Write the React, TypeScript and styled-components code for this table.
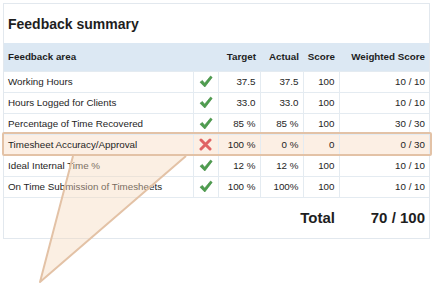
import styled, { createGlobalStyle } from 'styled-components';

const GlobalStyle = createGlobalStyle`
  html, body {
    margin: 0;
    padding: 0;
    background: #ffffff;
  }
  body {
    font-family: 'Liberation Sans', Arial, sans-serif;
    color: #1e1e1e;
  }
`;

const Page = styled.div`
  position: relative;
  width: 436px;
  height: 285px;
  padding: 3px 0 0 3px;
  box-sizing: border-box;
`;

const Card = styled.div`
  width: 427px;
  border: 1px solid #e2e8ee;
  box-sizing: border-box;
  background: #ffffff;
`;

const Title = styled.div`
  height: 39px;
  padding-left: 4px;
  display: flex;
  align-items: center;
  font-size: 14px;
  font-weight: 700;
`;

const Table = styled.table`
  width: 100%;
  border-collapse: collapse;
  table-layout: fixed;
  font-size: 9.8px;
`;

const HeadCell = styled.th<{ align?: 'left' | 'right' | 'center'; width: number }>`
  box-sizing: border-box;
  width: ${(p) => p.width}px;
  height: 28px;
  padding: 0 4px;
  background: #dce8f3;
  font-weight: 700;
  text-align: ${(p) => p.align ?? 'right'};
  white-space: nowrap;
`;

const BodyRow = styled.tr<{ flagged?: boolean }>`
  background: ${(p) => (p.flagged ? '#fcefe4' : 'transparent')};
`;

const Cell = styled.td<{ align?: 'left' | 'right' | 'center'; last?: boolean }>`
  height: 20px;
  padding: 0 4px;
  text-align: ${(p) => p.align ?? 'right'};
  border-top: 1px solid #e4ebf1;
  border-right: ${(p) => (p.last ? 'none' : '1px solid #e4ebf1')};
  white-space: nowrap;
  line-height: 1;
  vertical-align: middle;
`;

const TotalCell = styled.td<{ align?: 'left' | 'right' }>`
  height: 40px;
  padding: 0 4px;
  text-align: ${(p) => p.align ?? 'right'};
  border-top: 1px solid #e4ebf1;
  font-size: 15px;
  font-weight: 700;
`;

const Highlight = styled.div`
  position: absolute;
  left: 2px;
  top: 132px;
  width: 430px;
  height: 24px;
  box-sizing: border-box;
  border: 2px solid #e3c2a6;
  border-radius: 2px;
  pointer-events: none;
`;

const Callout = styled.svg`
  position: absolute;
  left: 0;
  top: 0;
  pointer-events: none;
`;

const Check = () => (
  <svg width="14" height="13" viewBox="0 0 14 13" style={{ display: 'block', margin: '0 auto' }}>
    <path d="M1 7.2 L3.4 5.4 L5.6 8.2 L11.6 1 L13.2 2.4 L5.8 12 Z" fill="#4f9d4f" stroke="#3e8a40" strokeWidth="0.6" strokeLinejoin="round" />
  </svg>
);

const Cross = () => (
  <svg width="13" height="13" viewBox="0 0 13 13" style={{ display: 'block', margin: '0 auto' }}>
    <path d="M2 2 L11 11 M11 2 L2 11" stroke="#e06464" strokeWidth="3" strokeLinecap="round" />
  </svg>
);

type Row = { area: string; ok: boolean; target: string; actual: string; score: string; weighted: string };

const rows: Row[] = [
  { area: 'Working Hours', ok: true, target: '37.5', actual: '37.5', score: '100', weighted: '10 / 10' },
  { area: 'Hours Logged for Clients', ok: true, target: '33.0', actual: '33.0', score: '100', weighted: '10 / 10' },
  { area: 'Percentage of Time Recovered', ok: true, target: '85 %', actual: '85 %', score: '100', weighted: '30 / 30' },
  { area: 'Timesheet Accuracy/Approval', ok: false, target: '100 %', actual: '0 %', score: '0', weighted: '0 / 30' },
  { area: 'Ideal Internal Time %', ok: true, target: '12 %', actual: '12 %', score: '100', weighted: '10 / 10' },
  { area: 'On Time Submission of Timesheets', ok: true, target: '100 %', actual: '100%', score: '100', weighted: '10 / 10' },
];

export default function App() {
  return (
    <Page>
      <GlobalStyle />
      <Card>
        <Title>Feedback summary</Title>
        <Table>
          <thead>
            <tr>
              <HeadCell align="left" width={189}>Feedback area</HeadCell>
              <HeadCell width={25} />
              <HeadCell width={42}>Target</HeadCell>
              <HeadCell width={43}>Actual</HeadCell>
              <HeadCell width={36}>Score</HeadCell>
              <HeadCell width={90}>Weighted Score</HeadCell>
            </tr>
          </thead>
          <tbody>
            {rows.map((r) => (
              <BodyRow key={r.area} flagged={!r.ok}>
                <Cell align="left">{r.area}</Cell>
                <Cell align="center">{r.ok ? <Check /> : <Cross />}</Cell>
                <Cell>{r.target}</Cell>
                <Cell>{r.actual}</Cell>
                <Cell>{r.score}</Cell>
                <Cell last>{r.weighted}</Cell>
              </BodyRow>
            ))}
            <tr>
              <TotalCell colSpan={5}>Total</TotalCell>
              <TotalCell>70 / 100</TotalCell>
            </tr>
          </tbody>
        </Table>
      </Card>
      <Highlight />
      <Callout width="436" height="285" viewBox="0 0 436 285">
        <path d="M73 156 L40 282 L186 156" fill="rgba(246, 214, 186, 0.4)" stroke="#e3c2a6" strokeWidth="2" strokeLinejoin="round" />
      </Callout>
    </Page>
  );
}
